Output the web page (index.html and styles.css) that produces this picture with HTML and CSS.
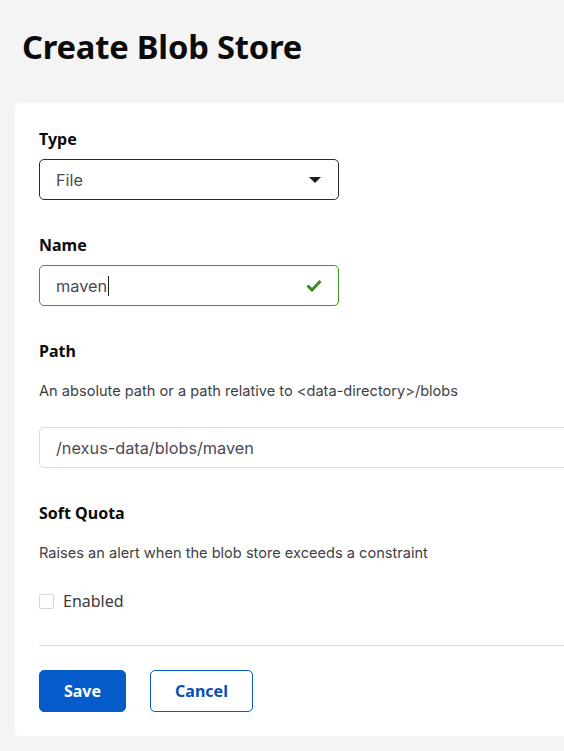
FILE: index.html
```html
<!DOCTYPE html>
<html lang="en">
<head>
<meta charset="utf-8">
<title>Create Blob Store</title>
<link rel="stylesheet" href="styles.css">
</head>
<body>
<div class="page">
  <h1 class="title">Create Blob Store</h1>
  <form class="card">
    <div class="field">
      <label class="label">Type</label>
      <div class="select">
        <span class="value">File</span>
        <svg class="caret" width="12" height="6" viewBox="0 0 12 6"><path d="M0 0H12L6 6Z" fill="#1a1a1a"/></svg>
      </div>
    </div>
    <div class="field">
      <label class="label">Name</label>
      <div class="input valid">
        <span class="value">maven</span><span class="cursor"></span>
        <svg class="check" width="16" height="13" viewBox="0 0 16 13"><path d="M1.5 6.5L6 11L14.5 2" fill="none" stroke="#3a8c1c" stroke-width="3"/></svg>
      </div>
    </div>
    <div class="field">
      <label class="label">Path</label>
      <p class="desc">An absolute path or a path relative to &lt;data-directory&gt;/blobs</p>
      <div class="input wide">
        <span class="value">/nexus-data/blobs/maven</span>
      </div>
    </div>
    <div class="field field-last">
      <label class="label">Soft Quota</label>
      <p class="desc">Raises an alert when the blob store exceeds a constraint</p>
      <div class="check-row">
        <span class="box"></span>
        <span class="check-label">Enabled</span>
      </div>
    </div>
    <hr class="divider">
    <div class="actions">
      <button type="button" class="btn primary">Save</button>
      <button type="button" class="btn secondary">Cancel</button>
    </div>
  </form>
</div>
</body>
</html>
```

FILE: styles.css
```css
html, body {
  margin: 0;
  padding: 0;
  background: #f4f4f4;
  overflow: hidden;
}
.page {
  padding: 0 0 0 15px;
  width: 760px;
}
.title {
  font-family: "Noto Sans", "Open Sans", sans-serif;
  font-weight: 700;
  font-size: 32.7px;
  line-height: 44px;
  color: #0b0b0b;
  margin: 0;
  padding: 25px 0 34px 7px;
  letter-spacing: -0.2px;
}
.card {
  background: #fff;
  border-radius: 5px;
  padding: 24px 24px 24px 24px;
  display: flex;
  flex-direction: column;
}
.field {
  display: flex;
  flex-direction: column;
  margin-bottom: 33px;
}
.field.field-last {
  margin-bottom: 32px;
}
.label {
  font-family: "Noto Sans", "Open Sans", sans-serif;
  font-weight: 700;
  font-size: 16px;
  line-height: 24px;
  color: #0b0b0b;
  margin-bottom: 8px;
}
.desc {
  font-family: Inter, Roboto, sans-serif;
  font-size: 14.6px;
  line-height: 20px;
  color: #3e3e44;
  margin: 10px 0 26px;
}
.select, .input {
  box-sizing: border-box;
  height: 41px;
  width: 300px;
  border-radius: 5px;
  display: flex;
  align-items: center;
  padding: 0 16px 0 16px;
  font-family: Inter, Roboto, sans-serif;
  font-size: 16.3px;
  color: #4a4a52;
}
.select {
  border: 1px solid #2b2b2b;
  justify-content: space-between;
}
.caret {
  margin-right: 1px;
}
.input.valid {
  border: 1px solid #3f9a22;
}
.cursor {
  width: 1px;
  height: 20px;
  background: #222;
  margin-left: 1px;
}
.check {
  margin-left: auto;
}
.input.wide {
  width: auto;
  border: 1px solid #dcdcea;
}
.check-row {
  display: flex;
  align-items: center;
  height: 24px;
}
.box {
  box-sizing: border-box;
  width: 15px;
  height: 15px;
  border: 1px solid #d6d6e6;
  border-radius: 2px;
  margin-right: 9px;
}
.check-label {
  font-family: "Noto Sans", "Open Sans", sans-serif;
  font-size: 16px;
  color: #3a3a3a;
}
.divider {
  border: 0;
  border-top: 1px solid #dcdcea;
  margin: 0 0 24px;
  width: 100%;
}
.actions {
  display: flex;
  gap: 24px;
}
.btn {
  box-sizing: border-box;
  height: 42px;
  border-radius: 5px;
  font-family: "Noto Sans", "Open Sans", sans-serif;
  font-weight: 700;
  font-size: 16px;
  cursor: pointer;
}
.primary {
  width: 87px;
  background: #055bc9;
  border: 1px solid #055bc9;
  color: #fff;
}
.secondary {
  width: 103px;
  background: #fff;
  border: 1px solid #055bc9;
  color: #0a4fb0;
}
```
